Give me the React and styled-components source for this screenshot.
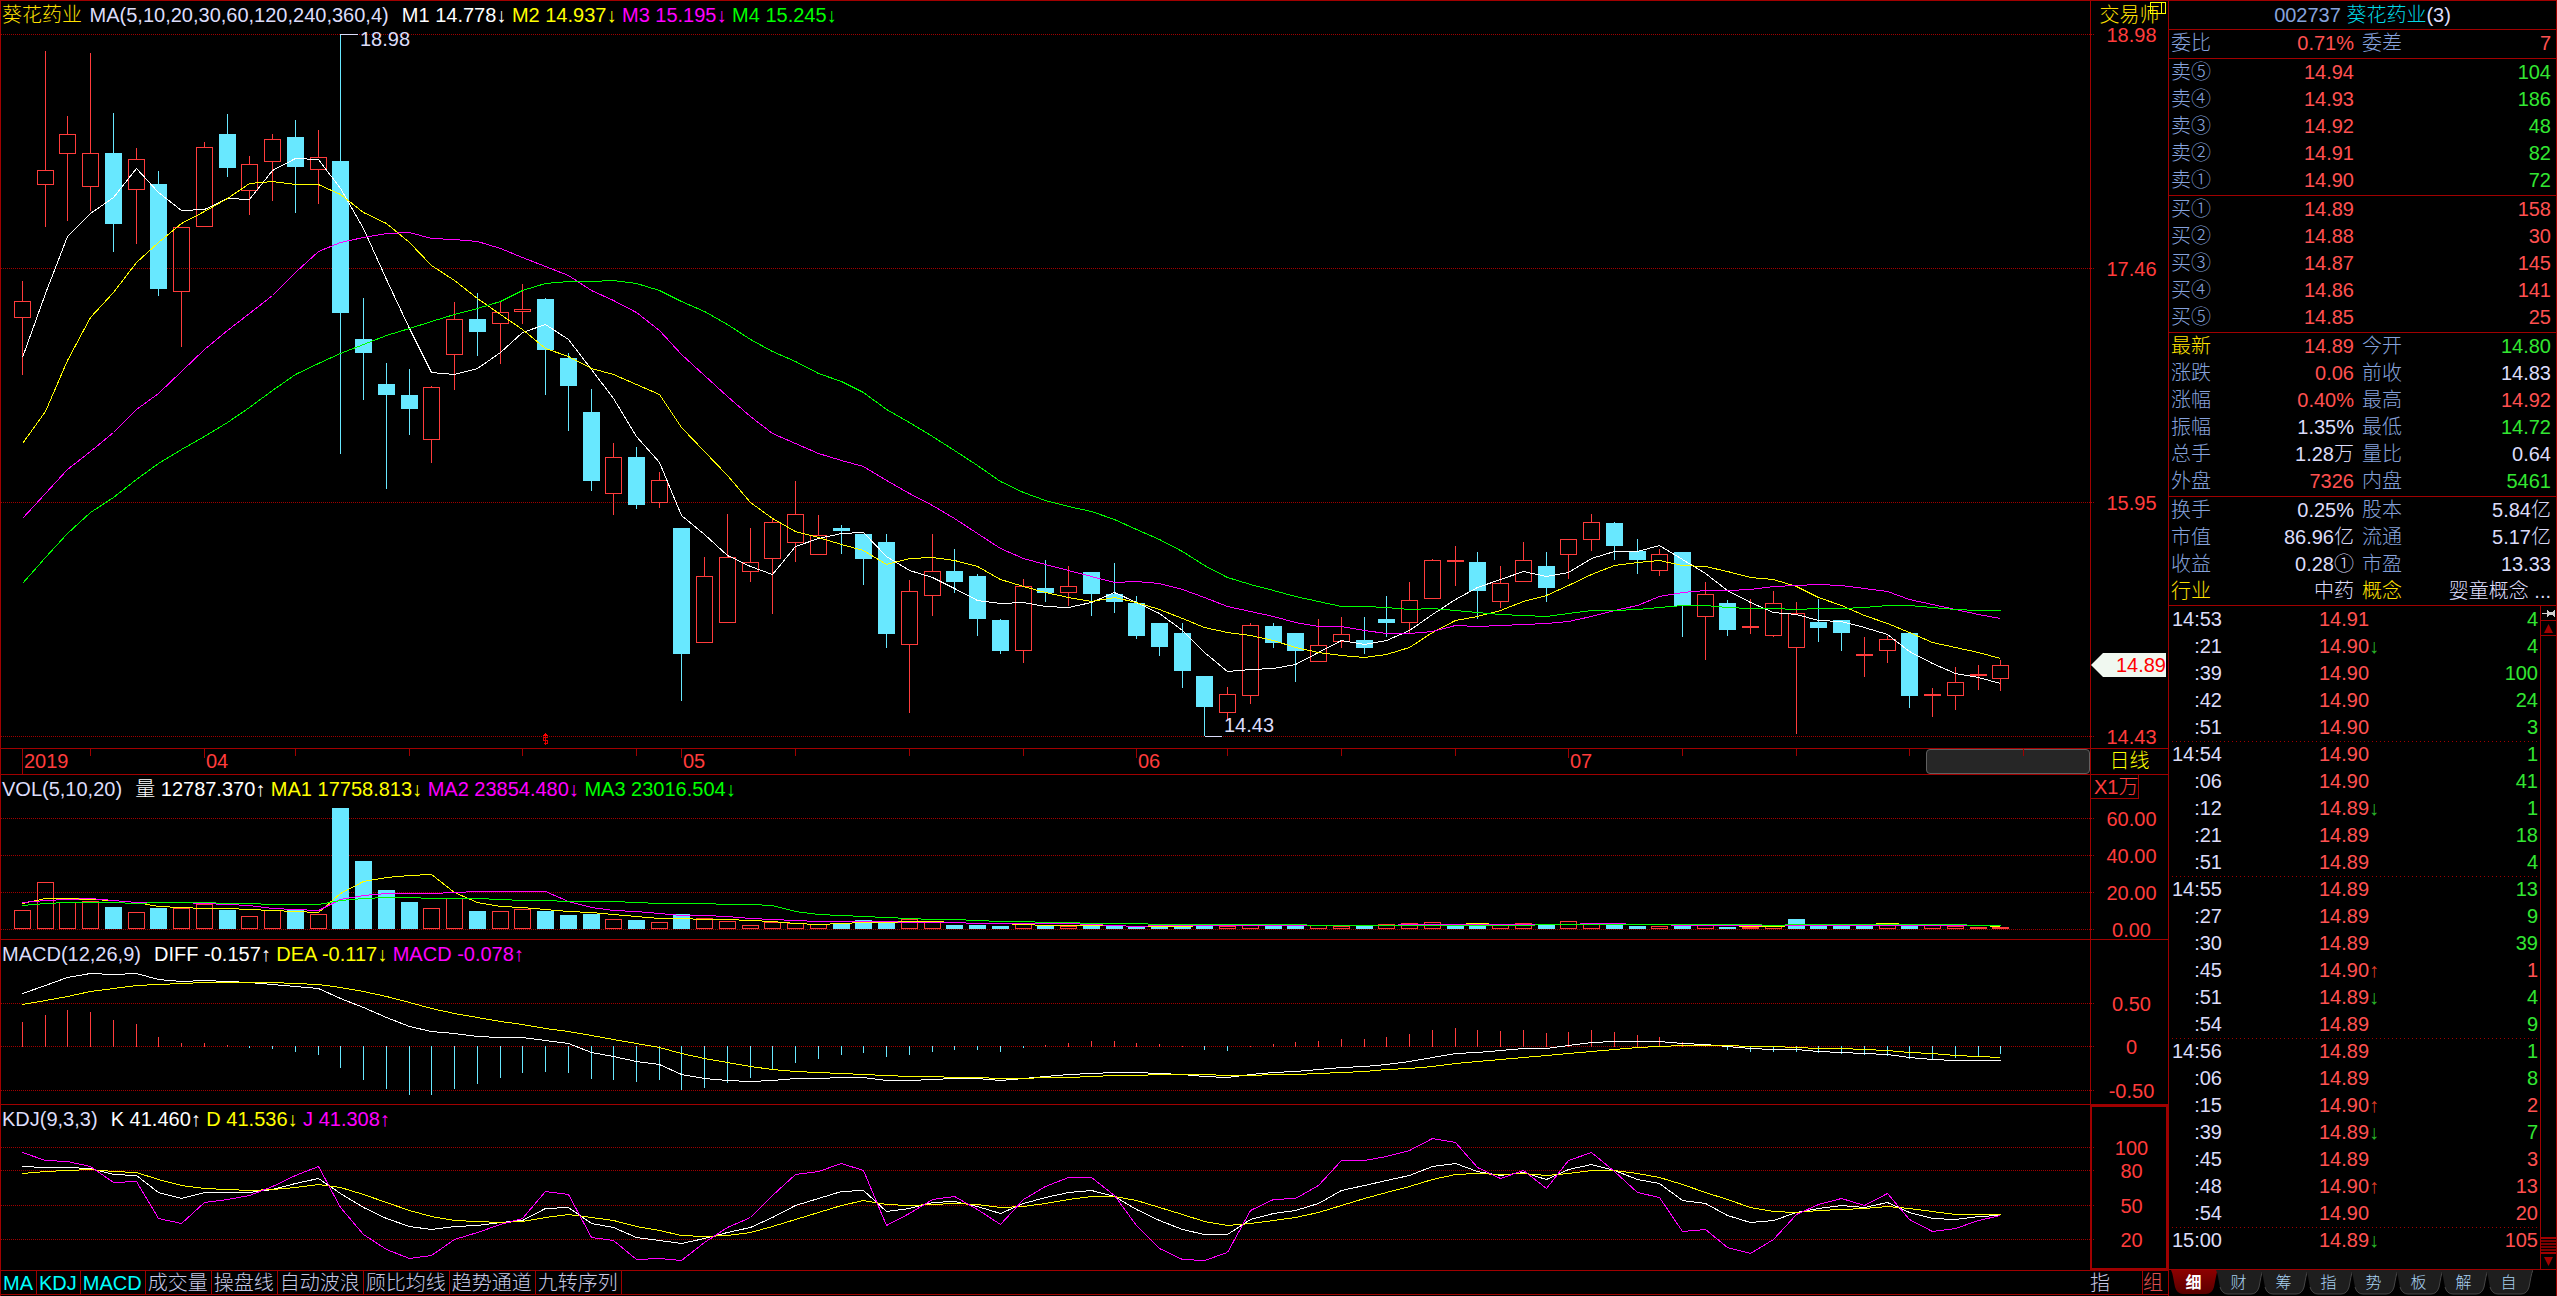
import React from "react";
import styled, { createGlobalStyle } from "styled-components";

const LINE = "#a00000";
const RED = "#ff3c3c";
const QUOTE_RED = "#ff5050";
const GREEN = "#32e632";
const CYAN = "#68e8ff";
const LABEL = "#86a2dc";
const PALE = "#dcdcfa";
const YELLOW = "#ffff00";
const MAGENTA = "#ff00ff";
const LIME = "#00ff00";

const GlobalStyle = createGlobalStyle`
  * {
    box-sizing: border-box;
  }
  body {
    margin: 0;
    background: #000;
    color: ${PALE};
    font-family: "Liberation Sans", "Noto Sans CJK SC", sans-serif;
    font-size: 20px;
    font-weight: 300;
  }
  button {
    margin: 0;
    padding: 0;
    border: 0;
    background: none;
    color: inherit;
    font: inherit;
    cursor: pointer;
  }
`;

/* ---------- data ---------- */

// [rising, high, body top, body bottom, low]
const CANDLES = [
  [1, 281, 301, 317, 375], [1, 51, 170, 184, 227], [1, 116, 134, 153, 221], [1, 53, 153, 186, 211],
  [0, 113, 153, 224, 252], [1, 148, 159, 189, 244], [0, 171, 184, 289, 296], [1, 227, 227, 291, 347],
  [1, 142, 147, 226, 226], [0, 114, 134, 168, 177], [1, 156, 164, 190, 215], [1, 134, 139, 161, 201],
  [0, 120, 137, 167, 213], [1, 130, 157, 169, 204], [0, 34, 161, 313, 454], [0, 298, 339, 353, 400],
  [0, 363, 384, 395, 489], [0, 369, 395, 409, 435], [1, 386, 387, 439, 463], [1, 302, 319, 354, 390],
  [0, 293, 319, 332, 356], [1, 302, 312, 323, 364], [1, 284, 309, 311, 324], [0, 298, 299, 350, 395],
  [0, 353, 358, 386, 431], [0, 389, 412, 481, 491], [1, 443, 457, 493, 515], [0, 447, 457, 505, 509],
  [1, 472, 480, 502, 508], [0, 528, 528, 654, 701], [1, 557, 576, 642, 642], [1, 514, 557, 622, 622],
  [1, 528, 562, 571, 582], [1, 519, 522, 558, 614], [1, 481, 514, 542, 562], [1, 515, 535, 554, 554],
  [0, 525, 528, 531, 554], [0, 534, 534, 559, 585], [0, 534, 542, 634, 648], [1, 580, 591, 644, 713],
  [1, 534, 571, 595, 616], [0, 549, 571, 582, 593], [0, 574, 576, 619, 636], [0, 619, 620, 651, 654],
  [1, 579, 586, 650, 663], [0, 560, 588, 593, 602], [1, 566, 586, 592, 606], [0, 572, 572, 594, 616],
  [0, 563, 594, 602, 613], [0, 596, 603, 636, 639], [0, 623, 623, 647, 656], [0, 623, 633, 671, 688],
  [0, 676, 676, 707, 736], [1, 687, 694, 712, 720], [1, 623, 625, 695, 704], [0, 623, 626, 643, 648],
  [0, 633, 633, 651, 682], [1, 619, 645, 661, 661], [1, 617, 634, 641, 648], [0, 617, 640, 648, 654],
  [0, 596, 619, 623, 637], [1, 582, 600, 622, 633], [1, 559, 560, 598, 598], [1, 546, 560, 561, 586],
  [0, 552, 562, 591, 619], [1, 566, 583, 601, 608], [1, 542, 560, 581, 581], [0, 552, 566, 588, 602],
  [1, 539, 539, 554, 579], [1, 514, 522, 539, 551], [0, 522, 523, 546, 560], [0, 539, 551, 560, 574],
  [1, 549, 554, 570, 576], [0, 552, 552, 606, 637], [1, 582, 594, 616, 660], [0, 600, 603, 630, 636],
  [1, 599, 626, 627, 634], [1, 591, 603, 635, 637], [1, 602, 613, 647, 734], [0, 599, 622, 628, 642],
  [0, 620, 620, 633, 651], [1, 637, 654, 655, 677], [1, 636, 639, 650, 663], [0, 632, 633, 696, 708],
  [1, 688, 694, 695, 717], [1, 667, 682, 695, 710], [1, 665, 674, 675, 690], [1, 660, 665, 678, 691],
];

const MA = [
  {
    color: "#ffffff",
    ys: [357, 293, 236, 213, 197, 168, 192, 210, 209, 198, 199, 170, 158, 159, 188, 228, 279, 328, 372, 374, 368, 352,
      332, 324, 339, 369, 398, 436, 462, 515, 534, 555, 566, 574, 546, 538, 533, 532, 556, 570, 577, 588, 600, 603,
      602, 606, 607, 602, 592, 602, 613, 630, 652, 671, 669, 668, 664, 652, 640, 644, 640, 630, 614, 599, 587, 579,
      571, 576, 572, 558, 551, 551, 545, 559, 573, 590, 602, 612, 614, 620, 621, 627, 634, 651, 663, 673, 677, 683],
  },
  {
    color: YELLOW,
    ys: [443, 411, 360, 317, 292, 262, 242, 223, 211, 198, 183, 181, 184, 184, 194, 212, 223, 242, 265, 280, 298, 314,
      329, 348, 356, 368, 374, 384, 394, 427, 451, 475, 502, 518, 531, 537, 544, 550, 564, 558, 557, 560, 566, 579,
      586, 592, 597, 601, 597, 602, 609, 618, 627, 632, 635, 640, 647, 652, 655, 657, 654, 647, 632, 620, 616, 610,
      601, 595, 585, 574, 565, 562, 560, 565, 566, 571, 577, 579, 586, 597, 605, 615, 623, 632, 642, 647, 652, 658],
  },
  {
    color: MAGENTA,
    ys: [518, 493, 469, 451, 432, 409, 393, 371, 349, 330, 313, 295, 272, 251, 242, 237, 233, 232, 238, 239, 241, 248,
      257, 266, 275, 290, 300, 312, 330, 354, 375, 396, 416, 433, 443, 453, 460, 466, 480, 493, 505, 518, 533, 548,
      558, 564, 570, 576, 582, 581, 583, 589, 597, 606, 611, 616, 622, 626, 626, 630, 633, 633, 631, 625, 626, 625,
      624, 623, 621, 616, 610, 605, 596, 592, 590, 590, 589, 586, 585, 584, 585, 588, 591, 599, 604, 609, 614, 618],
  },
  {
    color: LIME,
    ys: [583, 557, 533, 512, 497, 479, 463, 449, 436, 422, 407, 390, 374, 363, 353, 344, 335, 328, 321, 314, 308, 301,
      290, 283, 281, 281, 280, 283, 290, 301, 311, 324, 339, 351, 361, 373, 381, 392, 409, 422, 436, 450, 465, 481,
      492, 500, 506, 511, 519, 529, 539, 551, 565, 577, 584, 590, 596, 601, 606, 606, 607, 609, 608, 610, 612, 614,
      615, 616, 613, 610, 610, 609, 607, 605, 605, 607, 608, 608, 609, 608, 608, 607, 605, 605, 607, 609, 610, 610],
  },
];

const VOLUME = [910, 882, 902, 901, 907, 912, 908, 908, 904, 910, 916, 910, 910, 914, 808, 861, 890, 902, 908, 898, 911,
  911, 909, 911, 915, 914, 919, 920, 922, 914, 918, 921, 925, 922, 923, 924, 924, 920, 923, 919, 922, 925, 925, 926,
  924, 926, 926, 925, 926, 927, 927, 927, 926, 926, 925, 926, 926, 925, 926, 926, 924, 923, 922, 926, 926, 925, 923,
  925, 921, 924, 924, 926, 926, 925, 925, 927, 927, 926, 919, 926, 926, 926, 925, 926, 925, 926, 927, 927];

// days whose volume bar does not share the candle's direction
const VOLUME_FLIPPED = [60, 63, 78, 81];

const VOLUME_MA = [
  {
    color: YELLOW,
    ys: [903, 898, 898, 899, 900, 902, 906, 907, 908, 908, 909, 910, 911, 912, 893, 881, 877, 875, 874, 892, 902, 906,
      907, 909, 911, 912, 914, 916, 918, 918, 919, 919, 920, 921, 923, 924, 923, 922, 922, 921, 921, 922, 923, 923,
      924, 925, 925, 925, 925, 926, 926, 926, 925, 925, 925, 925, 925, 925, 925, 925, 925, 924, 924, 924, 923, 924,
      924, 924, 924, 924, 923, 924, 924, 925, 925, 925, 926, 926, 925, 924, 924, 924, 923, 924, 924, 925, 925, 926],
  },
  {
    color: MAGENTA,
    ys: [902, 900, 899, 898, 900, 902, 902, 902, 903, 904, 905, 908, 909, 910, 899, 895, 893, 893, 893, 892, 891, 891,
      891, 891, 901, 907, 910, 911, 913, 915, 915, 916, 918, 919, 920, 921, 921, 921, 921, 922, 922, 922, 923, 923,
      923, 923, 923, 924, 925, 926, 925, 925, 925, 925, 925, 925, 925, 925, 925, 925, 925, 924, 924, 924, 924, 924,
      924, 924, 924, 923, 923, 924, 924, 925, 925, 925, 925, 925, 925, 925, 925, 925, 925, 925, 925, 925, 925, 925],
  },
  {
    color: LIME,
    ys: [905, 903, 902, 902, 902, 903, 902, 902, 902, 903, 903, 904, 904, 904, 900, 898, 897, 897, 898, 898, 898, 899,
      900, 900, 901, 901, 901, 902, 903, 903, 903, 904, 904, 905, 911, 914, 915, 916, 917, 918, 919, 919, 920, 921,
      921, 922, 922, 923, 923, 923, 924, 924, 924, 924, 924, 924, 924, 925, 925, 925, 925, 925, 925, 925, 925, 925,
      925, 924, 924, 924, 924, 924, 924, 924, 924, 924, 924, 925, 924, 924, 924, 924, 924, 924, 924, 924, 925, 925],
  },
];

const MACD_BARS = [1022, 1015, 1010, 1012, 1020, 1024, 1037, 1043, 1043, 1045, 1047, 1048, 1051, 1054, 1067, 1079, 1088,
  1094, 1094, 1088, 1083, 1077, 1072, 1071, 1072, 1078, 1079, 1081, 1079, 1089, 1087, 1082, 1077, 1069, 1062, 1058,
  1054, 1052, 1056, 1054, 1051, 1049, 1049, 1051, 1047, 1045, 1043, 1041, 1041, 1043, 1044, 1046, 1049, 1050, 1046,
  1044, 1042, 1041, 1039, 1039, 1037, 1034, 1030, 1028, 1030, 1031, 1030, 1033, 1032, 1030, 1032, 1035, 1037, 1042,
  1044, 1049, 1051, 1051, 1051, 1052, 1053, 1054, 1055, 1058, 1058, 1057, 1056, 1053];

const MACD_LINES = [
  {
    color: "#ffffff",
    ys: [993, 985, 977, 973, 974, 973, 979, 981, 980, 981, 982, 984, 986, 988, 998, 1007, 1017, 1026, 1031, 1033, 1036,
      1037, 1037, 1040, 1043, 1052, 1056, 1061, 1064, 1074, 1078, 1080, 1081, 1080, 1078, 1078, 1077, 1077, 1080, 1080,
      1079, 1078, 1078, 1080, 1078, 1076, 1074, 1073, 1072, 1072, 1073, 1074, 1076, 1077, 1074, 1072, 1071, 1069, 1067,
      1066, 1064, 1061, 1057, 1053, 1052, 1050, 1048, 1048, 1045, 1042, 1041, 1041, 1041, 1043, 1044, 1046, 1048, 1049,
      1049, 1051, 1052, 1053, 1054, 1057, 1059, 1060, 1060, 1060],
  },
  {
    color: YELLOW,
    ys: [1004, 1000, 996, 991, 988, 985, 984, 983, 982, 982, 982, 982, 983, 984, 987, 991, 996, 1002, 1008, 1013, 1017,
      1021, 1024, 1028, 1031, 1035, 1039, 1043, 1047, 1053, 1058, 1062, 1066, 1069, 1071, 1072, 1073, 1074, 1075, 1076,
      1076, 1077, 1077, 1078, 1078, 1077, 1077, 1076, 1075, 1075, 1074, 1074, 1074, 1075, 1075, 1074, 1074, 1073, 1072,
      1071, 1069, 1068, 1066, 1063, 1061, 1059, 1057, 1055, 1053, 1051, 1049, 1047, 1046, 1045, 1045, 1045, 1046, 1046,
      1047, 1048, 1048, 1049, 1050, 1052, 1053, 1055, 1056, 1057],
  },
];

const KDJ_LINES = [
  {
    color: "#ffffff",
    ys: [1166, 1167, 1167, 1168, 1174, 1175, 1192, 1198, 1192, 1192, 1192, 1189, 1183, 1178, 1193, 1207, 1218, 1226,
      1229, 1226, 1225, 1222, 1220, 1208, 1207, 1223, 1227, 1237, 1240, 1243, 1238, 1232, 1227, 1217, 1205, 1198, 1191,
      1190, 1211, 1208, 1202, 1201, 1206, 1213, 1203, 1197, 1192, 1190, 1196, 1209, 1220, 1229, 1234, 1234, 1219, 1213,
      1210, 1203, 1190, 1185, 1180, 1175, 1166, 1163, 1171, 1175, 1172, 1179, 1169, 1164, 1170, 1179, 1183, 1200, 1203,
      1215, 1222, 1220, 1212, 1208, 1205, 1207, 1202, 1212, 1218, 1219, 1216, 1215],
  },
  {
    color: YELLOW,
    ys: [1173, 1171, 1170, 1169, 1171, 1172, 1179, 1185, 1188, 1189, 1190, 1189, 1187, 1184, 1187, 1194, 1202, 1210,
      1216, 1220, 1221, 1222, 1221, 1217, 1214, 1217, 1220, 1226, 1230, 1235, 1236, 1235, 1232, 1226, 1219, 1212, 1205,
      1200, 1204, 1205, 1204, 1203, 1204, 1207, 1206, 1203, 1199, 1196, 1196, 1200, 1207, 1214, 1221, 1225, 1223, 1220,
      1217, 1212, 1205, 1198, 1192, 1186, 1179, 1174, 1173, 1174, 1173, 1175, 1173, 1170, 1170, 1173, 1177, 1184, 1192,
      1199, 1207, 1211, 1212, 1210, 1209, 1208, 1206, 1208, 1211, 1214, 1214, 1214],
  },
  {
    color: MAGENTA,
    ys: [1152, 1160, 1161, 1166, 1182, 1181, 1218, 1223, 1202, 1199, 1195, 1186, 1175, 1166, 1207, 1234, 1249, 1258,
      1255, 1239, 1232, 1224, 1218, 1191, 1194, 1237, 1240, 1259, 1258, 1260, 1242, 1227, 1217, 1195, 1174, 1171, 1163,
      1170, 1225, 1213, 1199, 1196, 1209, 1224, 1199, 1186, 1177, 1177, 1195, 1225, 1248, 1259, 1260, 1252, 1210, 1199,
      1198, 1185, 1160, 1160, 1156, 1150, 1138, 1142, 1167, 1178, 1170, 1188, 1160, 1152, 1171, 1192, 1197, 1231, 1229,
      1247, 1253, 1239, 1214, 1204, 1198, 1205, 1193, 1219, 1231, 1228, 1220, 1215],
  },
];

const PRICE_AXIS = [["18.98", 34], ["17.46", 268], ["15.95", 502], ["14.43", 736]];
const VOLUME_AXIS = [["60.00", 818], ["40.00", 855], ["20.00", 892], ["0.00", 929]];
const MACD_AXIS = [["0.50", 1003], ["0", 1046], ["-0.50", 1090]];
const KDJ_AXIS = [["100", 1147], ["80", 1170], ["50", 1205], ["20", 1239]];

const MONTHS = [["2019", 0], ["04", 8], ["05", 29], ["06", 49], ["07", 68]];
const WEEK_TICKS = [3, 12, 17, 22, 27, 34, 39, 44, 53, 58, 63, 73, 78, 83, 88];

const INDICATOR_TABS = ["MA", "KDJ", "MACD", "成交量", "操盘线", "自动波浪", "顾比均线", "趋势通道", "九转序列"];
const SIDE_TABS = ["细", "财", "筹", "指", "势", "板", "解", "自"];

const ASKS = [["卖⑤", "14.94", 104], ["卖④", "14.93", 186], ["卖③", "14.92", 48], ["卖②", "14.91", 82], ["卖①", "14.90", 72]];
const BIDS = [["买①", "14.89", 158], ["买②", "14.88", 30], ["买③", "14.87", 145], ["买④", "14.86", 141], ["买⑤", "14.85", 25]];

const QUOTES = [
  ["最新", "14.89", "今开", "14.80", QUOTE_RED, GREEN, "#ffe000"],
  ["涨跌", "0.06", "前收", "14.83", QUOTE_RED, PALE],
  ["涨幅", "0.40%", "最高", "14.92", QUOTE_RED, QUOTE_RED],
  ["振幅", "1.35%", "最低", "14.72", PALE, GREEN],
  ["总手", "1.28万", "量比", "0.64", PALE, PALE],
  ["外盘", "7326", "内盘", "5461", QUOTE_RED, GREEN],
];
const BASICS = [
  ["换手", "0.25%", "股本", "5.84亿", PALE, PALE],
  ["市值", "86.96亿", "流通", "5.17亿", PALE, PALE],
  ["收益", "0.28①", "市盈", "13.33", PALE, PALE],
  ["行业", "中药", "概念", "婴童概念 ...", PALE, PALE, "#ffe000", "#ffe000"],
];

const TRADES = [
  ["14:53", "14.91", "", 4, GREEN], [":21", "14.90", "↓", 4, GREEN], [":39", "14.90", "", 100, GREEN],
  [":42", "14.90", "", 24, GREEN], [":51", "14.90", "", 3, GREEN], ["14:54", "14.90", "", 1, GREEN],
  [":06", "14.90", "", 41, GREEN], [":12", "14.89", "↓", 1, GREEN], [":21", "14.89", "", 18, GREEN],
  [":51", "14.89", "", 4, GREEN], ["14:55", "14.89", "", 13, GREEN], [":27", "14.89", "", 9, GREEN],
  [":30", "14.89", "", 39, GREEN], [":45", "14.90", "↑", 1, QUOTE_RED], [":51", "14.89", "↓", 4, GREEN],
  [":54", "14.89", "", 9, GREEN], ["14:56", "14.89", "", 1, GREEN], [":06", "14.89", "", 8, GREEN],
  [":15", "14.90", "↑", 2, QUOTE_RED], [":39", "14.89", "↓", 7, GREEN], [":45", "14.89", "", 3, QUOTE_RED],
  [":48", "14.90", "↑", 13, QUOTE_RED], [":54", "14.90", "", 20, QUOTE_RED], ["15:00", "14.89", "↓", 105, QUOTE_RED],
];

/* ---------- layout ---------- */

const Page = styled.main`
  display: flex;
  min-height: 100vh;
  border: 1px solid ${LINE};
  border-bottom: 0;
`;
const Charts = styled.section`
  flex: 1;
  min-width: 0;
  display: flex;
  flex-direction: column;
  padding-bottom: 1px;
  border-right: 1px solid ${LINE};
`;
const ChartRow = styled.div`
  display: flex;
  flex: ${props => (props.$grow ? "1 0 auto" : "none")};
  height: ${props => (props.$grow ? "auto" : `${props.$height}px`)};
  border-bottom: 1px solid ${LINE};
`;
const Canvas = styled.div`
  position: relative;
  flex: 1;
  min-width: 0;
`;
const Plot = styled.svg`
  position: absolute;
  inset: 0;
  width: 100%;
  height: 100%;
  overflow: visible;
  shape-rendering: crispEdges;
`;
const Legend = styled.div`
  position: relative;
  display: flex;
  line-height: 28px;
  padding-left: 1px;
  white-space: pre;
`;
const LegendItem = styled.span`
  color: ${props => props.$color || PALE};
`;
const LegendName = styled(LegendItem)`
  padding-right: 2px;
`;
const Axis = styled.div`
  position: relative;
  width: 78px;
  border-left: 1px solid ${LINE};
`;
const AxisFrame = styled.div`
  position: absolute;
  inset: 0;
  border: 2px solid ${LINE};
  border-left-width: 1px;
`;
const AxisLabel = styled.span`
  position: absolute;
  top: ${props => props.$top}%;
  left: 4px;
  right: 0;
  height: 24px;
  margin-top: -12px;
  line-height: 24px;
  text-align: center;
  color: ${RED};
`;
const AxisUnit = styled.span`
  display: block;
  width: 48px;
  height: 24px;
  line-height: 25px;
  padding-left: 3px;
  white-space: nowrap;
  color: ${RED};
  border: solid ${LINE};
  border-width: 0 1px 1px 0;
`;
const TraderButton = styled.button`
  display: block;
  width: 100%;
  line-height: 28px;
  color: #ffe000;
`;
const WindowIcon = styled.svg`
  position: absolute;
  top: 1px;
  right: 1px;
`;
const PriceTag = styled.span`
  position: absolute;
  top: ${props => props.$top}%;
  left: 0;
  right: 2px;
  height: 24px;
  margin-top: -12px;
  line-height: 24px;
  text-align: right;
  color: #ff0000;
  background: #f0f8f0;
  clip-path: polygon(0 50%, 12px 0, 100% 0, 100% 100%, 12px 100%);
`;
const Annotation = styled.span`
  position: absolute;
  left: ${props => props.$left}%;
  top: ${props => props.$top}%;
  margin-top: -12px;
  line-height: 24px;
  color: ${PALE};
`;
const MonthLabel = styled.span`
  position: absolute;
  left: ${props => props.$left}%;
  line-height: 25px;
  padding-left: 2px;
  color: ${RED};
`;
const RangeThumb = styled.div`
  position: absolute;
  top: 0;
  right: 0;
  bottom: 0;
  width: 164px;
  background: #262626;
  border: 1px solid #606060;
  border-radius: 4px;
`;
const PeriodButton = styled.button`
  display: block;
  width: 100%;
  line-height: 25px;
  color: ${YELLOW};
`;
const TabBar = styled.nav`
  display: flex;
  height: 24px;
  border-bottom: 1px solid ${LINE};
`;
const IndicatorTab = styled.button`
  padding: 0 3px 0 2px;
  line-height: 25px;
  border-right: 1px solid ${LINE};
  color: ${props => (props.$active ? "#00ffff" : "#c8c8e4")};
`;
const TabBarEnd = styled.div`
  display: flex;
  justify-content: space-between;
  width: 78px;
  margin-left: auto;
`;
const PanelButton = styled.button`
  width: 26px;
  line-height: 25px;
  text-align: left;
  color: ${props => (props.$selected ? "#e05050" : "#c8c8e4")};
  border-left: ${props => (props.$selected ? `1px solid ${LINE}` : 0)};
`;

const Side = styled.aside`
  display: flex;
  flex-direction: column;
  width: 387px;
`;
const StockTitle = styled.h1`
  margin: 0;
  height: 29px;
  line-height: 29px;
  text-align: center;
  font-size: 20px;
  font-weight: 300;
  color: ${LABEL};
  border-bottom: 1px solid ${LINE};
`;
const StockName = styled.span`
  color: #00d8e6;
`;
const StockGroup = styled.span`
  color: ${PALE};
`;
const Book = styled.table`
  width: 100%;
  padding-bottom: ${props => (props.$last ? 0 : 1)}px;
  table-layout: fixed;
  border-collapse: separate;
  border-spacing: 0;
  border-bottom: 1px solid ${LINE};
`;
const BookRow = styled.tr`
  height: 27px;
`;
const BookLabel = styled.th`
  width: ${props => (props.$second ? 53 : 43)}px;
  padding: 0 0 0 ${props => (props.$second ? 8 : 2)}px;
  line-height: 27px;
  text-align: left;
  font-weight: 300;
  white-space: nowrap;
  color: ${props => props.$color || LABEL};
`;
const BookValue = styled.td`
  width: ${props => (props.$last ? "auto" : "142px")};
  padding: 0 ${props => (props.$last ? 5 : 0)}px 0 0;
  line-height: 27px;
  text-align: right;
  white-space: nowrap;
  color: ${props => props.$color};
`;
const Tape = styled.div`
  display: flex;
  flex: 1;
  border-bottom: 1px solid ${LINE};
`;
const TapeList = styled.div`
  flex: 1;
`;
const TapeTable = styled.table`
  width: 100%;
  table-layout: fixed;
  border-collapse: collapse;
`;
const TapeRow = styled.tr`
  height: 27px;
  background: ${props =>
    props.$minute ? `linear-gradient(to right, ${LINE} 1px, transparent 1px) 3px 0 / 4px 1px repeat-x` : "none"};
`;
const TapeTime = styled.td`
  width: 53px;
  padding: 0;
  line-height: 27px;
  text-align: right;
  color: ${PALE};
`;
const TapePrice = styled.td`
  width: 160px;
  padding: 0 0 0 97px;
  line-height: 27px;
  white-space: nowrap;
  color: ${QUOTE_RED};
`;
const TapeArrow = styled.span`
  color: ${props => (props.$down ? "#28b428" : "#dc3c28")};
`;
const TapeVolume = styled.td`
  padding: 0 2px 0 0;
  line-height: 27px;
  text-align: right;
  color: ${props => props.$color};
`;
const ScrollTrack = styled.div`
  display: flex;
  flex-direction: column;
  width: 16px;
  border-left: 1px solid ${LINE};
`;
const ScrollButton = styled.button`
  display: flex;
  align-items: center;
  justify-content: center;
  height: 15px;
  border-bottom: ${props => (props.$ruled ? `1px solid ${LINE}` : 0)};
`;
const ScrollThumb = styled.div`
  height: 17px;
  margin-top: auto;
  border: solid ${LINE};
  border-width: 2px 0;
  background: repeating-linear-gradient(to bottom, #000 0 1px, #780000 1px 3px);
`;
const SideTabs = styled.nav`
  display: flex;
  height: 26px;
  padding-left: 2px;
`;
const SideTab = styled.button`
  position: relative;
  width: 45px;
  height: 25px;
  line-height: 26px;
  font-size: 16px;
  font-weight: ${props => (props.$active ? 700 : 300)};
  color: ${props => (props.$active ? "#ffffff" : "#a8d0f0")};
`;
const TabShape = styled.svg`
  position: absolute;
  top: 0;
  left: 0;
`;
const TabText = styled.span`
  position: relative;
`;

/* ---------- chart parts ---------- */

const WIDTH = 2089;
const BASE = 929;
const ZERO = 1046;

const dayX = i => Math.round(22 + i * 22.74);
const percentX = x => ((x - 1) / WIDTH) * 100;

const Grid = ({ axis }) =>
  axis.map(([label, y]) => (
    <line key={label} x1="1" x2="2094" y1={y + 0.5} y2={y + 0.5} stroke={LINE} strokeDasharray="1 1" />
  ));

const Lines = ({ series }) =>
  series.map(({ color, ys }) => (
    <polyline
      key={color}
      points={ys.map((y, i) => `${dayX(i) + 0.5},${y + 0.5}`).join(" ")}
      fill="none"
      stroke={color}
    />
  ));

const Candle = ({ x, candle: [rising, high, top, bottom, low] }) => {
  const color = rising ? RED : CYAN;
  return (
    <g fill={color}>
      {high < top && <rect x={x} y={high} width="1" height={top - high} />}
      {low > bottom && <rect x={x} y={bottom} width="1" height={low - bottom} />}
      {rising && bottom - top > 1 ? (
        <rect x={x - 7.5} y={top + 0.5} width="16" height={bottom - top} fill="none" stroke={color} />
      ) : (
        <rect x={x - 8} y={top} width="17" height={Math.max(bottom - top, 2)} />
      )}
    </g>
  );
};

const VolumeBar = ({ x, y, rising }) =>
  rising && BASE - y > 2 ? (
    <rect x={x - 7.5} y={y + 0.5} width="16" height={BASE - y - 1} fill="none" stroke={RED} />
  ) : (
    <rect x={x - 8} y={y} width="17" height={BASE - y} fill={rising ? RED : CYAN} />
  );

const Panel = ({ top, height, grow, axis, title, name, legend, children, overlay, axisExtra, framed }) => (
  <ChartRow $grow={grow} $height={height + 1}>
    <Canvas>
      <Plot viewBox={`1 ${top} ${WIDTH} ${height}`} preserveAspectRatio="none">
        <Grid axis={axis} />
        {children}
      </Plot>
      <Legend>
        {title && <LegendName $color="#ffe000">{title} </LegendName>}
        <LegendName>{name}{"  "}</LegendName>
        {legend.map(([text, color]) => (
          <LegendItem key={text} $color={color}>
            {text}
          </LegendItem>
        ))}
      </Legend>
      {overlay}
    </Canvas>
    <Axis>
      {framed && <AxisFrame />}
      {axisExtra}
      {axis.map(([label, y]) => (
        <AxisLabel key={label} $top={((y - top + 1) / height) * 100}>
          {label}
        </AxisLabel>
      ))}
    </Axis>
  </ChartRow>
);

const PricePanel = () => (
  <Panel
    top={1}
    height={747}
    grow
    axis={PRICE_AXIS}
    title="葵花药业"
    name="MA(5,10,20,30,60,120,240,360,4)"
    legend={[
      ["M1 14.778↓ ", "#ffffff"],
      ["M2 14.937↓ ", YELLOW],
      ["M3 15.195↓ ", MAGENTA],
      ["M4 15.245↓", LIME],
    ]}
    overlay={
      <>
        <Annotation $left={percentX(360)} $top={(38 / 747) * 100}>
          18.98
        </Annotation>
        <Annotation $left={percentX(1224)} $top={(724 / 747) * 100}>
          14.43
        </Annotation>
      </>
    }
    axisExtra={
      <>
        <TraderButton type="button">交易师</TraderButton>
        <WindowIcon width="17" height="13" viewBox="0 0 17 13" fill="none" stroke={YELLOW} aria-hidden="true">
          <path d="M.5 .5H15.5V11.5H.5ZM11.5 .5V11.5" shapeRendering="crispEdges" />
        </WindowIcon>
        <PriceTag $top={(664 / 747) * 100}>14.89</PriceTag>
      </>
    }
  >
    {CANDLES.map((candle, i) => (
      <Candle key={i} x={dayX(i)} candle={candle} />
    ))}
    <Lines series={MA} />
    <path d="M340 34.5H358M1205 736.5H1222" stroke={PALE} />
    <path d="M545 733L548 736H542Z" fill="#ff0000" />
    <path
      d="M547.5 737.5H543.5V740.5H547.5V743.5H543.5M545.5 736V745"
      fill="none"
      stroke="#e00000"
    />
  </Panel>
);

const DateRow = () => (
  <ChartRow $height={26}>
    <Canvas>
      <Plot viewBox={`1 749 ${WIDTH} 25`} preserveAspectRatio="none">
        {MONTHS.map(([label, i]) => (
          <rect key={label} x={dayX(i)} y="749" width="1" height={i === 0 ? 25 : 9} fill={LINE} />
        ))}
      </Plot>
      {MONTHS.map(([label, i]) => (
        <MonthLabel key={label} $left={percentX(dayX(i))}>
          {label}
        </MonthLabel>
      ))}
      <RangeThumb />
      <Plot viewBox={`1 749 ${WIDTH} 25`} preserveAspectRatio="none">
        {WEEK_TICKS.map(i => (
          <rect key={i} x={dayX(i)} y="749" width="1" height="7" fill={LINE} />
        ))}
      </Plot>
    </Canvas>
    <Axis>
      <PeriodButton type="button">日线</PeriodButton>
    </Axis>
  </ChartRow>
);

const VolumePanel = () => (
  <Panel
    top={775}
    height={164}
    axis={VOLUME_AXIS}
    name="VOL(5,10,20)"
    legend={[
      ["量 12787.370↑ ", "#ffffff"],
      ["MA1 17758.813↓ ", YELLOW],
      ["MA2 23854.480↓ ", MAGENTA],
      ["MA3 23016.504↓", LIME],
    ]}
    axisExtra={<AxisUnit>X1万</AxisUnit>}
  >
    {VOLUME.map((y, i) => (
      <VolumeBar key={i} x={dayX(i)} y={y} rising={Boolean(CANDLES[i][0]) !== VOLUME_FLIPPED.includes(i)} />
    ))}
    <Lines series={VOLUME_MA} />
  </Panel>
);

const MacdPanel = () => (
  <Panel
    top={940}
    height={164}
    axis={MACD_AXIS}
    name="MACD(12,26,9)"
    legend={[
      ["DIFF -0.157↑ ", "#ffffff"],
      ["DEA -0.117↓ ", YELLOW],
      ["MACD -0.078↑", MAGENTA],
    ]}
  >
    {MACD_BARS.map((y, i) => (
      <rect
        key={i}
        x={dayX(i)}
        y={Math.min(y, ZERO)}
        width="1"
        height={Math.abs(ZERO - y) + 1}
        fill={y > ZERO ? CYAN : RED}
      />
    ))}
    <Lines series={MACD_LINES} />
  </Panel>
);

const KdjPanel = () => (
  <Panel
    top={1105}
    height={165}
    axis={KDJ_AXIS}
    framed
    name="KDJ(9,3,3)"
    legend={[
      ["K 41.460↑ ", "#ffffff"],
      ["D 41.536↓ ", YELLOW],
      ["J 41.308↑", MAGENTA],
    ]}
  >
    <Lines series={KDJ_LINES} />
  </Panel>
);

/* ---------- side parts ---------- */

const OrderTable = ({ rows, color, label }) => (
  <Book aria-label={label}>
    <tbody>
      {rows.map(([name, price, amount]) => (
        <BookRow key={name}>
          <BookLabel scope="row">{name}</BookLabel>
          <BookValue $color={QUOTE_RED}>{price}</BookValue>
          <BookValue $last $color={color}>
            {amount}
          </BookValue>
        </BookRow>
      ))}
    </tbody>
  </Book>
);

const QuoteTable = ({ rows, last, label }) => (
  <Book aria-label={label} $last={last}>
    <tbody>
      {rows.map(([name, value, name2, value2, color, color2, labelColor, labelColor2]) => (
        <BookRow key={name}>
          <BookLabel scope="row" $color={labelColor}>
            {name}
          </BookLabel>
          <BookValue $color={color}>{value}</BookValue>
          <BookLabel scope="row" $second $color={labelColor2}>
            {name2}
          </BookLabel>
          <BookValue $last $color={color2}>
            {value2}
          </BookValue>
        </BookRow>
      ))}
    </tbody>
  </Book>
);

const TradeTape = () => (
  <Tape>
    <TapeList>
      <TapeTable aria-label="分笔成交">
        <tbody>
          {TRADES.map(([time, price, arrow, volume, color], i) => (
            <TapeRow key={i} $minute={i > 0 && time.length === 5}>
              <TapeTime>{time}</TapeTime>
              <TapePrice>
                {price}
                {arrow && <TapeArrow $down={arrow === "↓"}>{arrow}</TapeArrow>}
              </TapePrice>
              <TapeVolume $color={color}>{volume}</TapeVolume>
            </TapeRow>
          ))}
        </tbody>
      </TapeTable>
    </TapeList>
    <ScrollTrack>
      <ScrollButton $ruled type="button" aria-label="固定">
        <svg width="14" height="9" viewBox="0 0 14 9" stroke="#d0d0d0" fill="none" shapeRendering="crispEdges">
          <path d="M0 4.5H5M5.5 1V8M6.5 2V7M12.5 1V8M11.5 2V7M7 3.5H11M7 4.5H11M7 5.5H11" />
        </svg>
      </ScrollButton>
      <ScrollButton $ruled type="button" aria-label="向上">
        <svg width="9" height="9" viewBox="0 0 9 9" fill={LINE}>
          <path d="M4.5 0L9 9H0Z" />
        </svg>
      </ScrollButton>
      <ScrollThumb />
      <ScrollButton type="button" aria-label="向下">
        <svg width="9" height="9" viewBox="0 0 9 9" fill={LINE}>
          <path d="M4.5 9L9 0H0Z" />
        </svg>
      </ScrollButton>
    </ScrollTrack>
  </Tape>
);

const SideTabBar = () => (
  <SideTabs>
    {SIDE_TABS.map((name, i) => (
      <SideTab key={name} type="button" $active={i === 0}>
        <TabShape width="47" height="25" viewBox="0 0 47 25" aria-hidden="true">
          <defs>
            <linearGradient id="active-tab" x1="0" x2="0" y1="0" y2="1">
              <stop offset="0" stopColor="#8c0000" />
              <stop offset="1" stopColor="#5a0000" />
            </linearGradient>
          </defs>
          <path
            d="M0 0H47C45 4 44.500 10 43 17Q41 24 35 24H12Q6 24 4 17C2.500 10 2 4 0 0Z"
            fill={i === 0 ? "url(#active-tab)" : "#1e1e1e"}
          />
          {i > 0 && (
            <path
              d="M47 0C45 4 44.500 10 43 17Q41 24 35 24H12Q6 24 4 17"
              fill="none"
              stroke="#464646"
            />
          )}
        </TabShape>
        <TabText>{name}</TabText>
      </SideTab>
    ))}
  </SideTabs>
);

const App = () => (
  <>
    <GlobalStyle />
    <Page>
      <Charts>
        <PricePanel />
        <DateRow />
        <VolumePanel />
        <MacdPanel />
        <KdjPanel />
        <TabBar>
          {INDICATOR_TABS.map((name, i) => (
            <IndicatorTab key={name} type="button" $active={i < 3}>
              {name}
            </IndicatorTab>
          ))}
          <TabBarEnd>
            <PanelButton type="button">指</PanelButton>
            <PanelButton type="button" $selected>
              组
            </PanelButton>
          </TabBarEnd>
        </TabBar>
      </Charts>
      <Side>
        <StockTitle>
          002737 <StockName>葵花药业</StockName>
          <StockGroup>(3)</StockGroup>
        </StockTitle>
        <QuoteTable label="委比" rows={[["委比", "0.71%", "委差", "7", QUOTE_RED, QUOTE_RED]]} />
        <OrderTable label="卖盘" rows={ASKS} color={GREEN} />
        <OrderTable label="买盘" rows={BIDS} color={QUOTE_RED} />
        <QuoteTable label="行情" rows={QUOTES} />
        <QuoteTable label="基本面" rows={BASICS} last />
        <TradeTape />
        <SideTabBar />
      </Side>
    </Page>
  </>
);

export default App;
